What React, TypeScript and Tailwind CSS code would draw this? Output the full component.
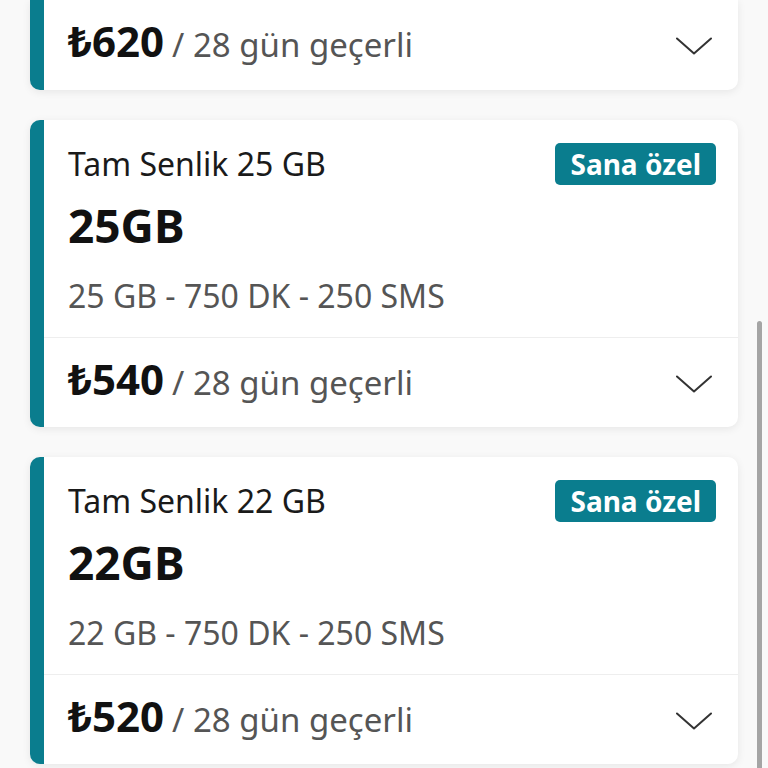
import React from "react";

const font = { fontFamily: '"Noto Sans", "Open Sans", sans-serif' };

function Chevron() {
  return (
    <svg width="36" height="18" viewBox="0 0 36 18" fill="none" className="mt-[2px]">
      <path d="M1 1.5 L18 16.5 L35 1.5" stroke="#333" strokeWidth="2" strokeLinecap="round" strokeLinejoin="round" />
    </svg>
  );
}

function Footer({ price, h }: { price: string; h: string }) {
  return (
    <div className={`${h} flex items-center justify-between pl-[24px] pr-[26px]`}>
      <div className="flex items-baseline pb-[4px]">
        <span className="text-[42px] leading-[48px] font-bold text-[#111]">{price}</span>
        <span className="text-[33px] leading-[48px] text-[#555] ml-[8px]">/ 28 gün geçerli</span>
      </div>
      <Chevron />
    </div>
  );
}

function Card({ title, gb, specs, price }: { title: string; gb: string; specs: string; price: string }) {
  return (
    <div className="w-[708px] bg-white rounded-[10px] border-l-[14px] border-[#0a7d8e] shadow-[0_2px_8px_rgba(0,0,0,0.08)]">
      <div className="pt-[23px] pl-[24px] pr-[22px] pb-[21px] border-b border-[#eeeeee]">
        <div className="flex items-center justify-between h-[42px]">
          <div className="text-[32px] leading-[42px] text-[#1a1a1a]">{title}</div>
          <div className="h-[42px] px-[15px] rounded-[5px] bg-[#0a7d8e] text-white text-[28px] font-bold leading-[42px]">Sana özel</div>
        </div>
        <div className="mt-[15px] text-[46px] font-bold leading-[50px] text-[#111]">{gb}</div>
        <div className="mt-[26px] text-[32px] leading-[40px] text-[#555]">{specs}</div>
      </div>
      <Footer price={price} h="h-[89px]" />
    </div>
  );
}

export default function App() {
  return (
    <div className="relative w-[768px] h-[768px] overflow-hidden bg-[#f9f9f9]" style={font}>
      <div className="pl-[30px] flex flex-col gap-[30px]">
        <div className="w-[708px] bg-white rounded-b-[10px] border-l-[14px] border-[#0a7d8e] shadow-[0_2px_8px_rgba(0,0,0,0.08)]">
          <Footer price="₺620" h="h-[90px]" />
        </div>
        <Card title="Tam Senlik 25 GB" gb="25GB" specs="25 GB - 750 DK - 250 SMS" price="₺540" />
        <Card title="Tam Senlik 22 GB" gb="22GB" specs="22 GB - 750 DK - 250 SMS" price="₺520" />
      </div>
      <div className="absolute left-[757px] top-[321px] w-[5px] h-[460px] rounded-full bg-[#a5a5a5]" />
    </div>
  );
}
